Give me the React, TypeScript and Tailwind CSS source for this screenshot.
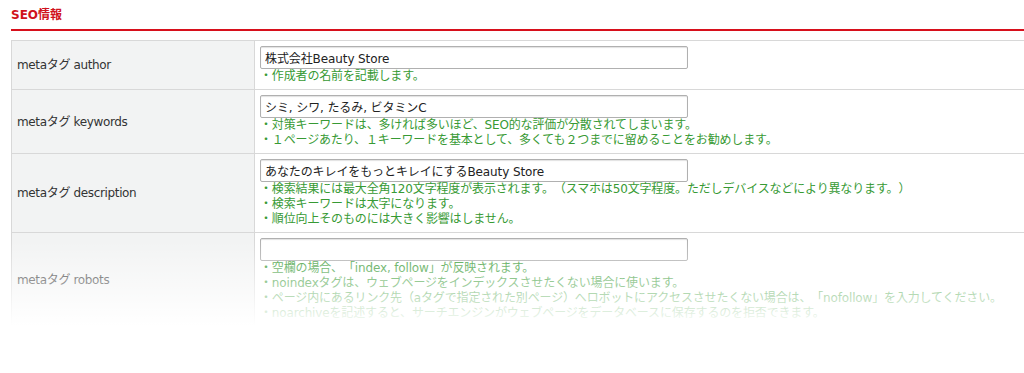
import React from 'react'

const FONT = '"DejaVu Sans", "Noto Sans CJK JP", sans-serif'

const ROWS: { label: string; value: string; notes: string[] }[] = [
  {
    label: 'metaタグ author',
    value: '株式会社Beauty Store',
    notes: ['・作成者の名前を記載します。'],
  },
  {
    label: 'metaタグ keywords',
    value: 'シミ, シワ, たるみ, ビタミンC',
    notes: [
      '・対策キーワードは、多ければ多いほど、SEO的な評価が分散されてしまいます。',
      '・１ページあたり、１キーワードを基本として、多くても２つまでに留めることをお勧めします。',
    ],
  },
  {
    label: 'metaタグ description',
    value: 'あなたのキレイをもっとキレイにするBeauty Store',
    notes: [
      '・検索結果には最大全角120文字程度が表示されます。（スマホは50文字程度。ただしデバイスなどにより異なります。）',
      '・検索キーワードは太字になります。',
      '・順位向上そのものには大きく影響はしません。',
    ],
  },
  {
    label: 'metaタグ robots',
    value: '',
    notes: [
      '・空欄の場合、「index, follow」が反映されます。',
      '・noindexタグは、ウェブページをインデックスさせたくない場合に使います。',
      '・ページ内にあるリンク先（aタグで指定された別ページ）へロボットにアクセスさせたくない場合は、「nofollow」を入力してください。',
      '・noarchiveを記述すると、サーチエンジンがウェブページをデータベースに保存するのを拒否できます。',
    ],
  },
]

export default function App() {
  return (
    <div className="relative w-[1024px] h-[373px] overflow-hidden bg-white" style={{ fontFamily: FONT }}>
      {/* Section title */}
      <h2 className="ml-[11px] pt-[8px] pb-[6px] text-[12px] leading-[15px] font-bold text-[#d0121b] border-b-2 border-[#d7101c]">
        SEO情報
      </h2>

      {/* Form table */}
      <div className="ml-[11px] mt-[9px] border-t border-[#d8d8d8]">
        {ROWS.map(row => (
          <div key={row.label} className="flex border-b border-[#d8d8d8]">
            <div className="w-[243px] shrink-0 flex items-center pl-[5px] bg-[#f2f3f3] border-l border-[#d8d8d8] text-[12px] tracking-[-0.35px] text-[#333]">
              {row.label}
            </div>
            <div className="flex-1 border-l border-[#d8d8d8] px-[5px] py-[5px]">
              <input
                readOnly
                value={row.value}
                className="block w-[428px] h-[23px] px-[4px] rounded-[2px] border border-[#b0b0b0] shadow-[inset_0_1px_1px_rgba(0,0,0,0.12)] text-[12px] tracking-[-0.1px] text-[#222] bg-white outline-none"
                style={{ fontFamily: FONT }}
              />
              {row.notes.map(n => (
                <p
                  key={n}
                  className="text-[12px] leading-[15px] tracking-[-0.15px] [text-spacing-trim:space-all] text-[#379a34] whitespace-nowrap"
                >
                  {n}
                </p>
              ))}
            </div>
          </div>
        ))}
      </div>

      {/* Fade-out at the bottom */}
      <div className="absolute left-0 right-0 top-[240px] h-[86px] bg-linear-to-b from-white/0 to-white" />
      <div className="absolute left-0 right-0 top-[326px] bottom-0 bg-white" />
    </div>
  )
}
